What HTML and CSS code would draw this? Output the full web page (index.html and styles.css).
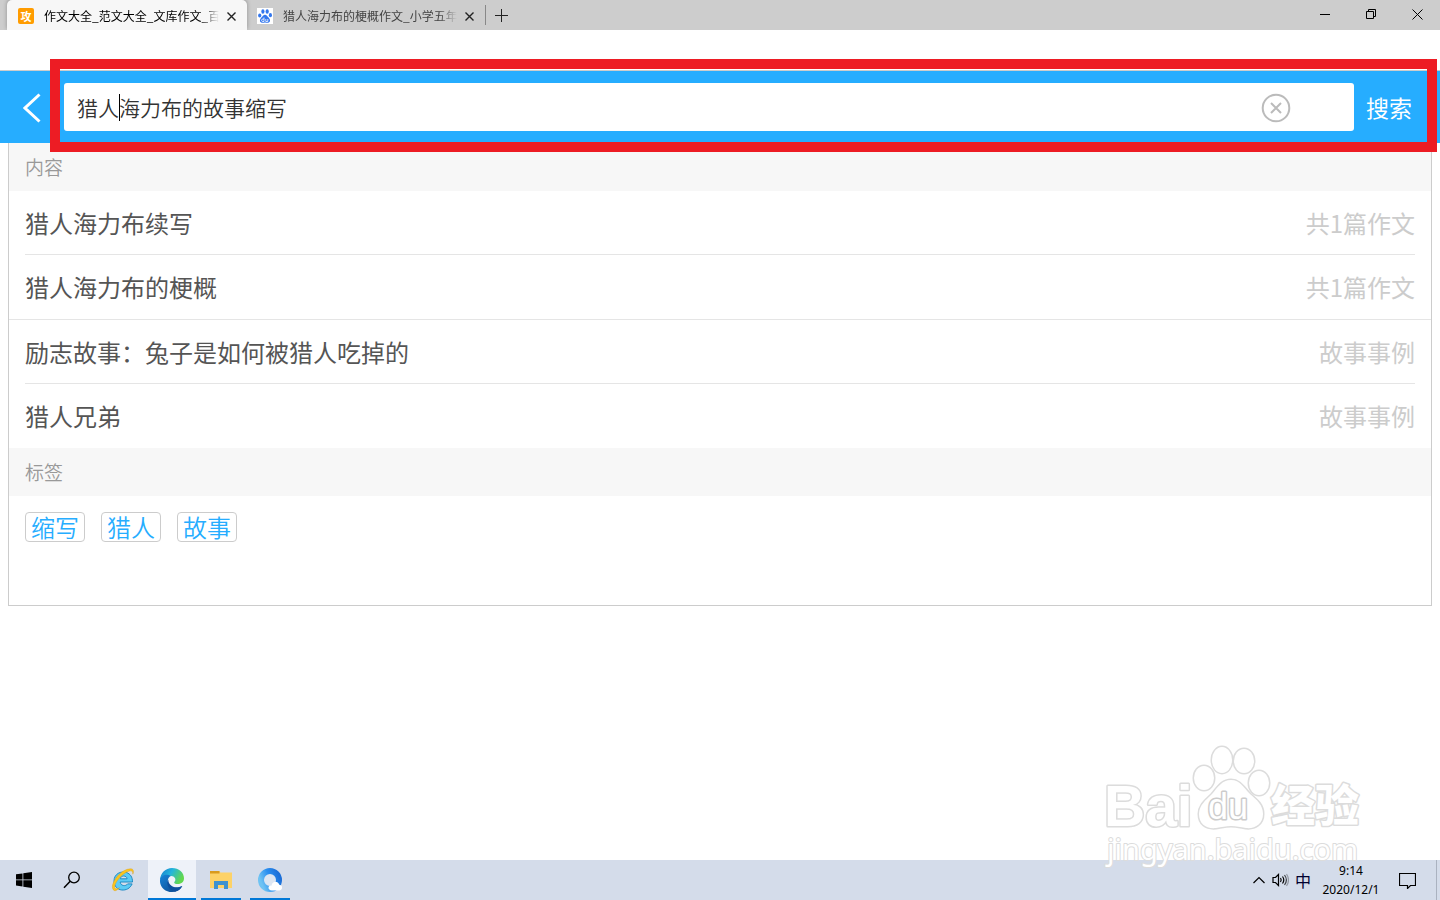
FILE: index.html
```html
<!DOCTYPE html>
<html lang="zh-CN">
<head>
  <meta charset="UTF-8" />
  <meta name="viewport" content="width=device-width, initial-scale=1.0"/>
  <title>作文大全_范文大全_文库作文_百度文库</title>
  <link rel="stylesheet" href="styles.css">
</head>
<body>
  <!-- browser tabs -->
  <div class="titlebar">
    <div class="tab active">
      <span class="favicon favicon-orange">攻</span>
      <span class="tab-title">作文大全_范文大全_文库作文_百度</span>
      <button class="tab-close" aria-label="关闭标签页">
        <svg width="9" height="9" viewBox="0 0 9 9"><path d="M.5 .5l8 8M8.500 .5l-8 8"/></svg>
      </button>
    </div>
    <div class="tab">
      <svg class="favicon" width="16" height="16" viewBox="0 0 16 16">
        <rect width="16" height="16" fill="#fff"/>
        <g fill="#3377ee">
          <ellipse cx="2.700" cy="7.500" rx="1.600" ry="2.100"/>
          <ellipse cx="5.900" cy="3.500" rx="1.600" ry="2.300"/>
          <ellipse cx="10.200" cy="3.500" rx="1.600" ry="2.300"/>
          <ellipse cx="13.400" cy="7.200" rx="1.600" ry="2.100"/>
          <path d="M8 6.800c1.600 0 2.400 1.700 3.800 3 1.700 1.600 1.800 4.800-.8 5-1.200.1-1.800-.3-3-.3s-1.800.4-3 .3c-2.600-.2-2.500-3.400-.8-5C5.600 8.500 6.400 6.800 8 6.800z"/>
        </g>
        <path d="M7 9.500v4H5.800a1 1 0 0 1 0-2.400H7M8.800 11v2.500h2V11" fill="none" stroke="#fff" stroke-width=".8"/>
      </svg>
      <span class="tab-title">猎人海力布的梗概作文_小学五年</span>
      <button class="tab-close" aria-label="关闭标签页">
        <svg width="9" height="9" viewBox="0 0 9 9"><path d="M.5 .5l8 8M8.500 .5l-8 8"/></svg>
      </button>
    </div>
    <button class="new-tab" aria-label="新标签页">
      <svg width="13" height="13" viewBox="0 0 13 13"><path d="M6.500 0v13M0 6.500h13"/></svg>
    </button>
    <div class="window-buttons">
      <button aria-label="最小化"><svg width="11" height="11" viewBox="0 0 11 11"><path d="M0 5.500h10"/></svg></button>
      <button aria-label="还原"><svg width="11" height="11" viewBox="0 0 11 11"><path d="M.5 2.500h7v7h-7zM2.500 2.500v-2h7v7h-2"/></svg></button>
      <button aria-label="关闭"><svg width="11" height="11" viewBox="0 0 11 11"><path d="M.5 .5l10 10M10.500 .5l-10 10"/></svg></button>
    </div>
  </div>

  <main class="page">
    <form class="search-bar">
      <a class="back" href="#" aria-label="返回">
        <svg width="18" height="30" viewBox="0 0 18 30"><path d="M16.500 1.500L2 15l14.500 13.500"/></svg>
      </a>
      <div class="search-box">
        <input type="text" value="猎人海力布的故事缩写" aria-label="搜索作文">
        <span class="caret"></span>
        <button type="button" class="clear" aria-label="清空">
          <svg width="30" height="30" viewBox="0 0 30 30"><circle cx="15" cy="15" r="13.300"/><path d="M10 10l10 10M20 10L10 20"/></svg>
        </button>
      </div>
      <button type="button" class="search-btn">搜索</button>
      <span class="highlight"></span>
    </form>

    <section class="panel">
      <h2>内容</h2>
      <ul>
        <li><a href="#"><span>猎人海力布续写</span><em>共1篇作文</em></a></li>
        <li><a href="#"><span>猎人海力布的梗概</span><em>共1篇作文</em></a></li>
      </ul>
      <ul>
        <li><a href="#"><span>励志故事：兔子是如何被猎人吃掉的</span><em>故事事例</em></a></li>
        <li><a href="#"><span>猎人兄弟</span><em>故事事例</em></a></li>
      </ul>
      <h2>标签</h2>
      <div class="tags">
        <a href="#">缩写</a>
        <a href="#">猎人</a>
        <a href="#">故事</a>
      </div>
    </section>
  </main>

  <footer class="taskbar">
    <button class="task" aria-label="开始">
      <svg width="16" height="16" viewBox="0 0 16 16"><path d="M0 2.300l6.500-.9v6.100H0zM7.300 1.300L16 0v7.500H7.300zM0 8.300h6.500v6.100L0 13.500zM7.300 8.300H16V16l-8.700-1.300z"/></svg>
    </button>
    <button class="task" aria-label="搜索">
      <svg width="18" height="18" viewBox="0 0 18 18"><circle cx="11" cy="6.500" r="5.300" fill="none" stroke="#000" stroke-width="1.300"/><path d="M7.200 10.300L1 16.800" stroke="#000" stroke-width="1.500"/></svg>
    </button>
    <button class="task ie" aria-label="Internet Explorer">
      <svg width="24" height="24" viewBox="0 0 24 24">
        <path d="M21.500 14H9.200c.3 4 5.600 4.700 7.400 1.900h4.500C17.500 25 3 24 3 13 3 1 21.900.6 21.500 14zM9.300 10.800h6.800c-.4-3.700-6.200-3.800-6.800 0z" fill="#5ccbf5" stroke="#218bc4"/>
        <path d="M3.200 22.500C-3 19 8 1.200 19.500.8c3.200 0 3.500 2.700 2.300 5.400C22 3.500 21 2.500 18.800 2.900 11 4.300 2 16.500 3.900 20.100c.6 1.200 2.600.8 4.600-.3-1.600 1.800-4 3.500-5.300 2.700z" fill="#fbc51f" stroke="#d99b12" stroke-width=".4"/>
      </svg>
    </button>
    <button class="task edge current" aria-label="Microsoft Edge">
      <svg width="24" height="24" viewBox="0 0 24 24">
        <defs>
          <linearGradient id="edgeTop" x1="0" x2="1" y1="0" y2=".4"><stop offset="0" stop-color="#1479cc"/><stop offset=".5" stop-color="#24b5dc"/><stop offset="1" stop-color="#62d84e"/></linearGradient>
          <linearGradient id="edgeLow" x1="0" x2="1" y1="0" y2="1"><stop offset="0" stop-color="#1683d8"/><stop offset="1" stop-color="#0c4489"/></linearGradient>
        </defs>
        <path d="M0 11.500C.6 5 5.600 0 12 0c7 0 12 4.800 12 10.200 0 4.800-4.600 6.400-8 5.700-1.800-.4-2.300-1.200-1.300-2.300 1.800-2.400-.1-5.600-3.500-5.600C6.500 8 3 9.200 0 11.500z" fill="url(#edgeTop)"/>
        <path d="M0 12c.6-4.900 7-6.800 10.800-4-2.600 1.300-3.700 4.200-2.500 7.300 1.700 4.300 7.900 6.100 14 2.600C20 22 16.500 24 12 24 5 24-.6 18.500 0 12z" fill="url(#edgeLow)"/>
        <path d="M8.300 11.500C5.600 16 9 23 15.300 23.500 19 22.500 21 20.500 22.300 17.900 14.700 21.500 8.300 17.700 8.300 11.500z" fill="#0d4f9e"/>
      </svg>
    </button>
    <button class="task running" aria-label="文件资源管理器">
      <svg width="22" height="20" viewBox="0 0 22 20">
        <path d="M0 1h9l1.500 1.500H22V18H0z" fill="#fdd267"/>
        <path d="M0 1h9.500v2.500H0z" fill="#d99b1e"/>
        <path d="M4 19v-8h14v8h-4v-4H8v4z" fill="#3e92d0"/>
      </svg>
    </button>
    <button class="task running" aria-label="QQ浏览器">
      <svg width="24" height="24" viewBox="0 0 24 24">
        <defs>
          <linearGradient id="ring" x1="0" x2="1" y1=".6" y2=".2"><stop offset="0" stop-color="#6fc3f3"/><stop offset=".5" stop-color="#2a8ff0"/><stop offset="1" stop-color="#1c6fd8"/></linearGradient>
        </defs>
        <circle cx="12" cy="12" r="9" fill="#dde6f2" stroke="url(#ring)" stroke-width="6"/>
        <path d="M14 22.500c-4.700 0-4.500-5.200-.4-5.200.6-4.400 6.500-4.700 7.700-.6 3.700 0 3.700 5.800 0 5.800z" fill="#fff"/>
      </svg>
    </button>

    <div class="tray">
      <svg width="14" height="8" viewBox="0 0 14 8"><path d="M1.500 7L7 1.500 12.500 7"/></svg>
      <svg width="17" height="14" viewBox="0 0 17 14"><path d="M1 4.500h2.500l3-3v11l-3-3H1zM8.500 5q1.400 2 0 4M10.500 3.500q2.600 3.500 0 7"/><path d="M12.500 2q3.800 5 0 10" opacity=".7"/><path d="M14.500 1q4 6 0 12" opacity=".3"/></svg>
      <span class="ime">中</span>
      <div class="clock"><span>9:14</span><span>2020/12/1</span></div>
      <svg class="notice" width="17" height="17" viewBox="0 0 17 17"><path d="M.5 1.500h16v12h-5l-3 3v-3h-8z"/></svg>
    </div>
  </footer>

  <!-- watermark floats over the page and the taskbar -->
  <svg class="watermark" width="290" height="150" viewBox="0 0 290 150" aria-hidden="true">
    <text class="wm-latin" x="14" y="96" font-size="57">Bai</text>
    <g>
      <ellipse cx="114" cy="48" rx="10" ry="12"/>
      <ellipse cx="132" cy="30" rx="10" ry="13"/>
      <ellipse cx="154" cy="31" rx="10" ry="12"/>
      <ellipse cx="169" cy="53" rx="10" ry="12"/>
      <path d="M141 50c9 0 13 8 19 14 7 6 13 11 13 20 0 10-8 15-17 14-6-1-10-2-15-2s-9 1-15 2c-10 1-17-4-17-14 0-9 7-14 13-20 6-7 10-14 19-14z"/>
    </g>
    <text class="wm-du" x="118" y="89" font-size="36">du</text>
    <text class="wm-cjk" x="181" y="92" font-size="44">经验</text>
    <text class="wm-url" x="17" y="130" font-size="29">jingyan.baidu.com</text>
  </svg>
</body>
</html>
```

FILE: styles.css
```css
* {
  box-sizing: border-box;
}

body {
  margin: 0;
  min-height: 100vh;
  display: flex;
  flex-direction: column;
  position: relative;
  background: #fff;
  color: #555;
  font-family: "Noto Sans CJK SC", sans-serif;
}

button {
  border: 0;
  padding: 0;
  background: none;
  font-family: inherit;
}

a {
  color: inherit;
  text-decoration: none;
}

svg {
  display: block;
  flex: none;
}

/* title bar */
.titlebar {
  display: flex;
  height: 30px;
  padding-left: 7px;
  background: #cdcdcd;
}

.tab {
  display: flex;
  align-items: center;
  width: 238px;
  padding: 2px 6px 0 10px;
  color: #444;
  font-size: 12px;
}

.tab.active {
  width: 240px;
  padding-left: 11px;
  border-radius: 5px 5px 0 0;
  background: #f7f7f7;
  color: #000;
  box-shadow: 0 -1px 4px rgba(0,0,0,0.3);
}

.favicon {
  width: 16px;
  height: 16px;
  margin-right: 10px;
  flex: none;
}

.favicon-orange {
  border-radius: 2px;
  background: #ff9c00;
  color: #fff;
  font-size: 11px;
  font-weight: 700;
  line-height: 16px;
  text-align: center;
}

.tab-title {
  flex: 1;
  overflow: hidden;
  line-height: 16px;
  white-space: nowrap;
  -webkit-mask-image: linear-gradient(to right, #000 90%, transparent);
  mask-image: linear-gradient(to right, #000 90%, transparent);
}

.tab-close {
  width: 22px;
  padding-left: 8px;
}

.tab-close svg,
.new-tab svg {
  fill: none;
  stroke: #222;
  stroke-width: 1.4;
}

.new-tab {
  align-self: center;
  height: 20px;
  padding-left: 9px;
  border-left: 1px solid #888;
}

.new-tab svg {
  stroke-width: 1;
}

.window-buttons {
  display: flex;
  margin-left: auto;
}

.window-buttons button {
  display: flex;
  align-items: center;
  justify-content: center;
  width: 46px;
  height: 28px;
}

.window-buttons svg {
  fill: none;
  stroke: #000;
}

/* page */
.page {
  flex: 1;
  position: relative;
  z-index: 1;
  padding-top: 40px;
  background: #fff;
}

.search-bar {
  display: flex;
  align-items: center;
  position: relative;
  height: 73px;
  padding-left: 23px;
  border-top: 1px solid #ccc;
  background: #26adff;
}

.back {
  width: 41px;
  padding-top: 2px;
}

.back svg {
  fill: none;
  stroke: #fff;
  stroke-width: 3;
}

.search-box {
  flex: 1;
  display: flex;
  align-items: center;
  position: relative;
  height: 48px;
  padding-right: 63px;
  border-radius: 3px;
  background: #fff;
}

.search-box input {
  flex: 1;
  min-width: 0;
  height: 48px;
  padding: 0 13px;
  border: 0;
  outline: 0;
  background: none;
  color: #333;
  font-family: inherit;
  font-size: 21px;
  font-weight: 350;
}

.caret {
  position: absolute;
  left: 55px;
  top: 11px;
  width: 1px;
  height: 27px;
  background: #000;
}

.clear {
  padding-top: 2px;
}

.clear svg {
  fill: none;
  stroke: #bbb;
  stroke-width: 2;
}

.search-btn {
  width: 86px;
  padding-right: 16px;
  color: #fff;
  font-size: 23px;
}

.highlight {
  position: absolute;
  left: 50px;
  right: 3px;
  top: -12px;
  bottom: -9px;
  border: 10px solid #ed1c24;
  pointer-events: none;
}

.panel {
  margin: 0 8px;
  padding-bottom: 63px;
  border: 1px solid #ccc;
  border-top: 0;
}

.panel h2 {
  margin: 0;
  padding: 0 16px;
  background: #f7f7f7;
  color: #999;
  font-size: 19px;
  font-weight: 350;
  line-height: 48px;
}

.panel ul {
  margin: 0;
  padding: 0 16px;
  list-style: none;
}

.panel ul + ul {
  border-top: 1px solid #e5e5e5;
}

.panel li + li {
  border-top: 1px solid #e5e5e5;
}

.panel li a {
  display: flex;
  justify-content: space-between;
  height: 64px;
  font-size: 24px;
  line-height: 63px;
}

.panel li:first-child a {
  height: 63px;
}

.panel em {
  color: #ccc;
  font-style: normal;
}

.tags {
  display: flex;
  gap: 16px;
  padding: 16px;
  padding-bottom: 0;
}

.tags a {
  width: 60px;
  height: 30px;
  border: 1px solid #ccc;
  border-radius: 4px;
  color: #26adff;
  font-size: 24px;
  font-weight: 350;
  line-height: 28px;
  text-align: center;
}

/* taskbar */
.taskbar {
  display: flex;
  height: 40px;
  background: #d4dcea;
}

.task {
  display: flex;
  align-items: center;
  justify-content: center;
  width: 48px;
  height: 40px;
}

.ie {
  width: 52px;
  padding-left: 2px;
}

.current {
  background: #eef2f9;
  border-bottom: 2px solid #0078d7;
}

.running {
  width: 40px;
  margin-left: 5px;
  border-bottom: 2px solid #0078d7;
}

.running + .running {
  margin-left: 9px;
}

.current,
.running {
  padding-top: 2px;
}

.tray {
  display: flex;
  align-items: center;
  gap: 6px;
  margin-left: auto;
  margin-right: 3px;
  padding-right: 20px;
  border-right: 1px solid #aab2c0;
  color: #000;
}

.tray svg {
  fill: none;
  stroke: #000;
  stroke-width: 1.2;
}

.ime {
  color: #000030;
  font-size: 16px;
}

.clock {
  display: flex;
  flex-direction: column;
  width: 68px;
  font-family: "Noto Sans", sans-serif;
  font-size: 12px;
  line-height: 19px;
  text-align: center;
}

.notice {
  margin-left: 8px;
}

.watermark {
  position: absolute;
  z-index: 2;
  right: 60px;
  bottom: 20px;
  fill: #fff;
  stroke: #dcdcdc;
  stroke-width: 3;
  paint-order: stroke;
  stroke-linejoin: round;
  pointer-events: none;
}

.wm-latin {
  font-family: "Liberation Sans", sans-serif;
  font-weight: 700;
}

.wm-du {
  font-family: "Liberation Sans", sans-serif;
  stroke: #ccc;
}

.wm-cjk {
  font-family: "Noto Sans CJK SC", sans-serif;
  font-weight: 900;
}

.wm-url {
  font-family: "Noto Sans", sans-serif;
  stroke-width: 2;
}
```
